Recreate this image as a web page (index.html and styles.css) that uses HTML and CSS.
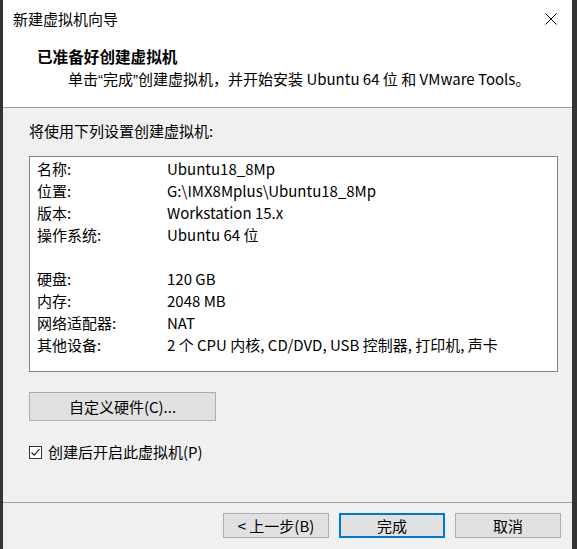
FILE: index.html
```html
<!DOCTYPE html>
<html lang="zh-CN">
<head>
<meta charset="utf-8">
<title>新建虚拟机向导</title>
<link rel="stylesheet" href="styles.css">
</head>
<body>
<div class="dialog">
  <div class="header">
    <div class="titlebar">
      <span class="title">新建虚拟机向导</span>
      <svg class="close" width="12" height="12" viewBox="0 0 12 12"><path d="M0.5 0.5 L11.5 11.5 M11.5 0.5 L0.5 11.5" stroke="#000" stroke-width="1"/></svg>
    </div>
    <div class="heading">已准备好创建虚拟机</div>
    <div class="subtitle">单击<span class="q">“</span>完成<span class="q">”</span>创建虚拟机，并开始安装 Ubuntu 64 位 和 VMware Tools。</div>
  </div>
  <div class="content">
    <div class="intro">将使用下列设置创建虚拟机:</div>
    <div class="summary">
      <div class="row"><span class="label">名称:</span><span class="value">Ubuntu18_8Mp</span></div>
      <div class="row"><span class="label">位置:</span><span class="value">G:\IMX8Mplus\Ubuntu18_8Mp</span></div>
      <div class="row"><span class="label">版本:</span><span class="value">Workstation 15.x</span></div>
      <div class="row"><span class="label">操作系统:</span><span class="value">Ubuntu 64 位</span></div>
      <div class="row"></div>
      <div class="row"><span class="label">硬盘:</span><span class="value">120 GB</span></div>
      <div class="row"><span class="label">内存:</span><span class="value">2048 MB</span></div>
      <div class="row"><span class="label">网络适配器:</span><span class="value">NAT</span></div>
      <div class="row"><span class="label">其他设备:</span><span class="value">2 个 CPU 内核, CD/DVD, USB 控制器, 打印机, 声卡</span></div>
    </div>
    <button class="btn custom">自定义硬件(C)...</button>
    <label class="check">
      <span class="box"><svg width="11" height="11" viewBox="0 0 11 11"><path d="M1.5 5.5 L4.2 8.2 L9.5 2.2" fill="none" stroke="#222" stroke-width="1.2"/></svg></span>
      <span class="check-text">创建后开启此虚拟机(P)</span>
    </label>
  </div>
  <div class="footer">
    <button class="btn nav">&lt; 上一步(B)</button>
    <button class="btn nav primary">完成</button>
    <button class="btn nav">取消</button>
  </div>
</div>
</body>
</html>
```

FILE: styles.css
```css
html, body {
  margin: 0;
  padding: 0;
}
body {
  width: 577px;
  height: 549px;
  background: #343434;
  overflow: hidden;
  font-family: "Noto Sans CJK SC", "Noto Sans", sans-serif;
  font-size: 15px;
  color: #000;
}
.dialog {
  margin-left: 3px;
  width: 569px;
  height: 549px;
  background: #f0f0f0;
  display: flex;
  flex-direction: column;
}
.header {
  height: 107px;
  background: #fff;
  border-bottom: 1px solid #a0a0a0;
  box-sizing: content-box;
}
.titlebar {
  height: 38px;
  display: flex;
  align-items: center;
  justify-content: space-between;
  padding: 0 15px 0 10px;
}
.title {
  line-height: 38px;
  font-size: 15px;
}
.close {
  display: block;
}
.heading {
  margin-top: 8px;
  padding-left: 34px;
  line-height: 20px;
  font-size: 15.6px;
  font-weight: bold;
}
.subtitle {
  margin-top: 3px;
  padding-left: 65px;
  line-height: 20px;
}
.q {
  font-family: "Liberation Sans", sans-serif;
}
.content {
  height: 394px;
  padding: 13px 0 0 26px;
  box-sizing: border-box;
  display: flex;
  flex-direction: column;
  align-items: flex-start;
}
.intro {
  line-height: 20px;
}
.summary {
  margin-top: 15px;
  width: 529px;
  height: 216px;
  box-sizing: border-box;
  border: 1px solid #828282;
  background: #fff;
  padding: 1px 0 0 7px;
}
.row {
  display: flex;
  height: 22px;
  line-height: 22px;
}
.label {
  width: 130px;
  flex: none;
}
.btn {
  font-family: inherit;
  font-size: 15px;
  color: #000;
  background: #e1e1e1;
  border: 1px solid #adadad;
  padding: 0;
  margin: 0;
  box-sizing: border-box;
}
.custom {
  margin-top: 20px;
  width: 187px;
  height: 29px;
}
.check {
  margin-top: 24px;
  display: flex;
  align-items: center;
  height: 14px;
}
.box {
  width: 13px;
  height: 13px;
  box-sizing: border-box;
  border: 1px solid #333;
  background: #fff;
  display: flex;
  align-items: center;
  justify-content: center;
}
.box svg {
  display: block;
}
.check-text {
  margin-left: 6px;
  line-height: 20px;
}
.footer {
  border-top: 1px solid #a0a0a0;
  display: flex;
  justify-content: flex-end;
  gap: 10px;
  padding: 10px 11px 0 0;
}
.nav {
  width: 106px;
  height: 25px;
}
.primary {
  border: 2px solid #0078d7;
}
```
